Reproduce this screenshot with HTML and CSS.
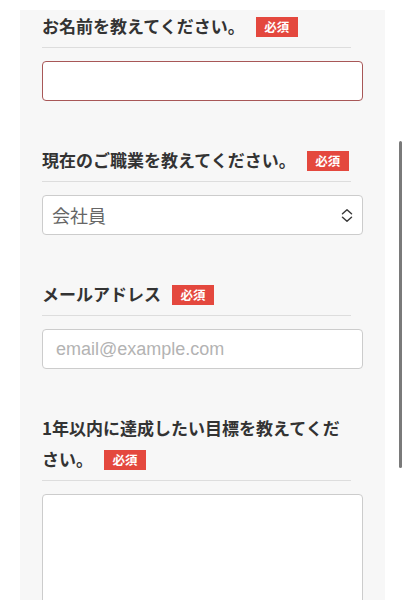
FILE: index.html
```html
<!DOCTYPE html>
<html lang="ja">
<head>
<meta charset="utf-8">
<title>フォーム</title>
<link rel="stylesheet" href="styles.css">
</head>
<body>
<div class="panel">
  <div class="field">
    <div class="label">お名前を教えてください。<span class="req">必須</span></div>
    <input class="control error" type="text">
  </div>
  <div class="field">
    <div class="label">現在のご職業を教えてください。<span class="req">必須</span></div>
    <div class="select">
      <span class="select-text">会社員</span>
      <svg class="chev" width="12" height="15" viewBox="0 0 12 15" fill="none" stroke="#3a3a3a" stroke-width="1.5" stroke-linecap="round" stroke-linejoin="round"><path d="M1.5 5.8 L6 1.8 L10.5 5.8"/><path d="M1.5 9.2 L6 13.2 L10.5 9.2"/></svg>
    </div>
  </div>
  <div class="field">
    <div class="label">メールアドレス<span class="req">必須</span></div>
    <input class="control" type="email" placeholder="email@example.com">
  </div>
  <div class="field">
    <div class="label">1年以内に達成したい目標を教えてください。<span class="req">必須</span></div>
    <textarea class="control area"></textarea>
  </div>
</div>
<div class="scroll-thumb"></div>
</body>
</html>
```
FILE: styles.css
```css
html, body {
  margin: 0;
  padding: 0;
  background: #ffffff;
  overflow: hidden;
  height: 600px;
}
body {
  font-family: "Noto Sans CJK JP", "Noto Sans", sans-serif;
  color: #333333;
}
.panel {
  margin: 10px 0 0 20px;
  width: 365px;
  height: 590px;
  overflow: hidden;
  background: #f7f7f7;
  box-sizing: border-box;
  padding: 0 22px;
}
.field {
  margin-bottom: 43px;
}
.label {
  font-size: 17px;
  font-weight: 700;
  line-height: 31px;
  padding-bottom: 6px;
  margin-right: 12px;
  border-bottom: 1px solid #dddddd;
  color: #333333;
}
.req {
  display: inline-block;
  vertical-align: 1px;
  margin-left: 11px;
  background: #e4483e;
  color: #ffffff;
  font-size: 12.5px;
  font-weight: 700;
  line-height: 20px;
  height: 20px;
  width: 42px;
  text-align: center;
}
.control {
  display: block;
  box-sizing: border-box;
  width: 100%;
  height: 40px;
  margin: 13px 0 0 0;
  border: 1px solid #cccccc;
  border-radius: 4px;
  background: #ffffff;
  padding: 0 13px;
  font-family: "Helvetica Neue", "Liberation Sans", "Noto Sans CJK JP", sans-serif;
  font-size: 18px;
  color: #333333;
  outline: none;
}
.control::placeholder {
  color: #b3b3b3;
}
.error {
  border-color: #a85757;
}
.select {
  box-sizing: border-box;
  height: 40px;
  margin-top: 13px;
  border: 1px solid #cccccc;
  border-radius: 4px;
  background: #ffffff;
  display: flex;
  align-items: center;
  justify-content: space-between;
  padding: 0 9px 0 9px;
}
.select-text {
  font-family: "Noto Sans CJK JP", sans-serif;
  font-size: 18px;
  color: #666666;
}
.chev {
  display: block;
}
.area {
  height: 120px;
  resize: none;
}
.scroll-thumb {
  position: fixed;
  left: 399px;
  top: 141px;
  width: 3px;
  height: 327px;
  border-radius: 2px;
  background: #7a7a7a;
}
```
